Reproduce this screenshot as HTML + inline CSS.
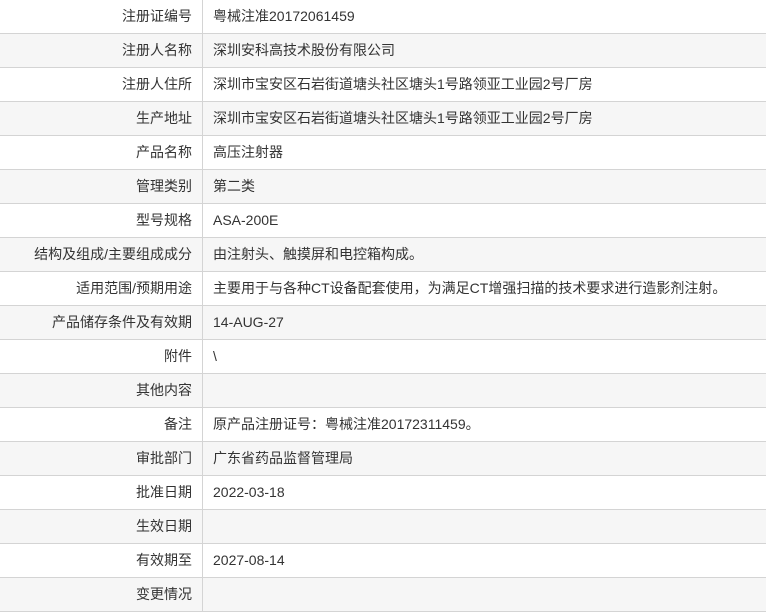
<!DOCTYPE html>
<html><head><meta charset="utf-8"><style>
body{margin:0;width:766px;height:613px;overflow:hidden;background:#fff;font-family:"Liberation Sans","Noto Sans CJK SC",sans-serif;font-size:14px;color:#333}
.r{position:absolute;left:0;width:766px;height:33px;border-bottom:1px solid #d4d4d4;line-height:33px}
.r.g{background:#f6f6f6}
.l{position:absolute;left:0;width:192px;text-align:right;top:0}
.v{position:absolute;left:202px;top:0;height:33px;border-left:1px solid #d4d4d4;padding-left:10px;white-space:nowrap}
</style></head><body>
<div class="r" style="top:0"><span class="l">注册证编号</span><span class="v">粤械注准20172061459</span></div>
<div class="r g" style="top:34px"><span class="l">注册人名称</span><span class="v">深圳安科高技术股份有限公司</span></div>
<div class="r" style="top:68px"><span class="l">注册人住所</span><span class="v">深圳市宝安区石岩街道塘头社区塘头1号路领亚工业园2号厂房</span></div>
<div class="r g" style="top:102px"><span class="l">生产地址</span><span class="v">深圳市宝安区石岩街道塘头社区塘头1号路领亚工业园2号厂房</span></div>
<div class="r" style="top:136px"><span class="l">产品名称</span><span class="v">高压注射器</span></div>
<div class="r g" style="top:170px"><span class="l">管理类别</span><span class="v">第二类</span></div>
<div class="r" style="top:204px"><span class="l">型号规格</span><span class="v">ASA-200E</span></div>
<div class="r g" style="top:238px"><span class="l">结构及组成/主要组成成分</span><span class="v">由注射头、触摸屏和电控箱构成。</span></div>
<div class="r" style="top:272px"><span class="l">适用范围/预期用途</span><span class="v">主要用于与各种CT设备配套使用，为满足CT增强扫描的技术要求进行造影剂注射。</span></div>
<div class="r g" style="top:306px"><span class="l">产品储存条件及有效期</span><span class="v">14-AUG-27</span></div>
<div class="r" style="top:340px"><span class="l">附件</span><span class="v">\</span></div>
<div class="r g" style="top:374px"><span class="l">其他内容</span><span class="v"></span></div>
<div class="r" style="top:408px"><span class="l">备注</span><span class="v">原产品注册证号：粤械注准20172311459。</span></div>
<div class="r g" style="top:442px"><span class="l">审批部门</span><span class="v">广东省药品监督管理局</span></div>
<div class="r" style="top:476px"><span class="l">批准日期</span><span class="v">2022-03-18</span></div>
<div class="r g" style="top:510px"><span class="l">生效日期</span><span class="v"></span></div>
<div class="r" style="top:544px"><span class="l">有效期至</span><span class="v">2027-08-14</span></div>
<div class="r g" style="top:578px"><span class="l">变更情况</span><span class="v"></span></div>
</body></html>
